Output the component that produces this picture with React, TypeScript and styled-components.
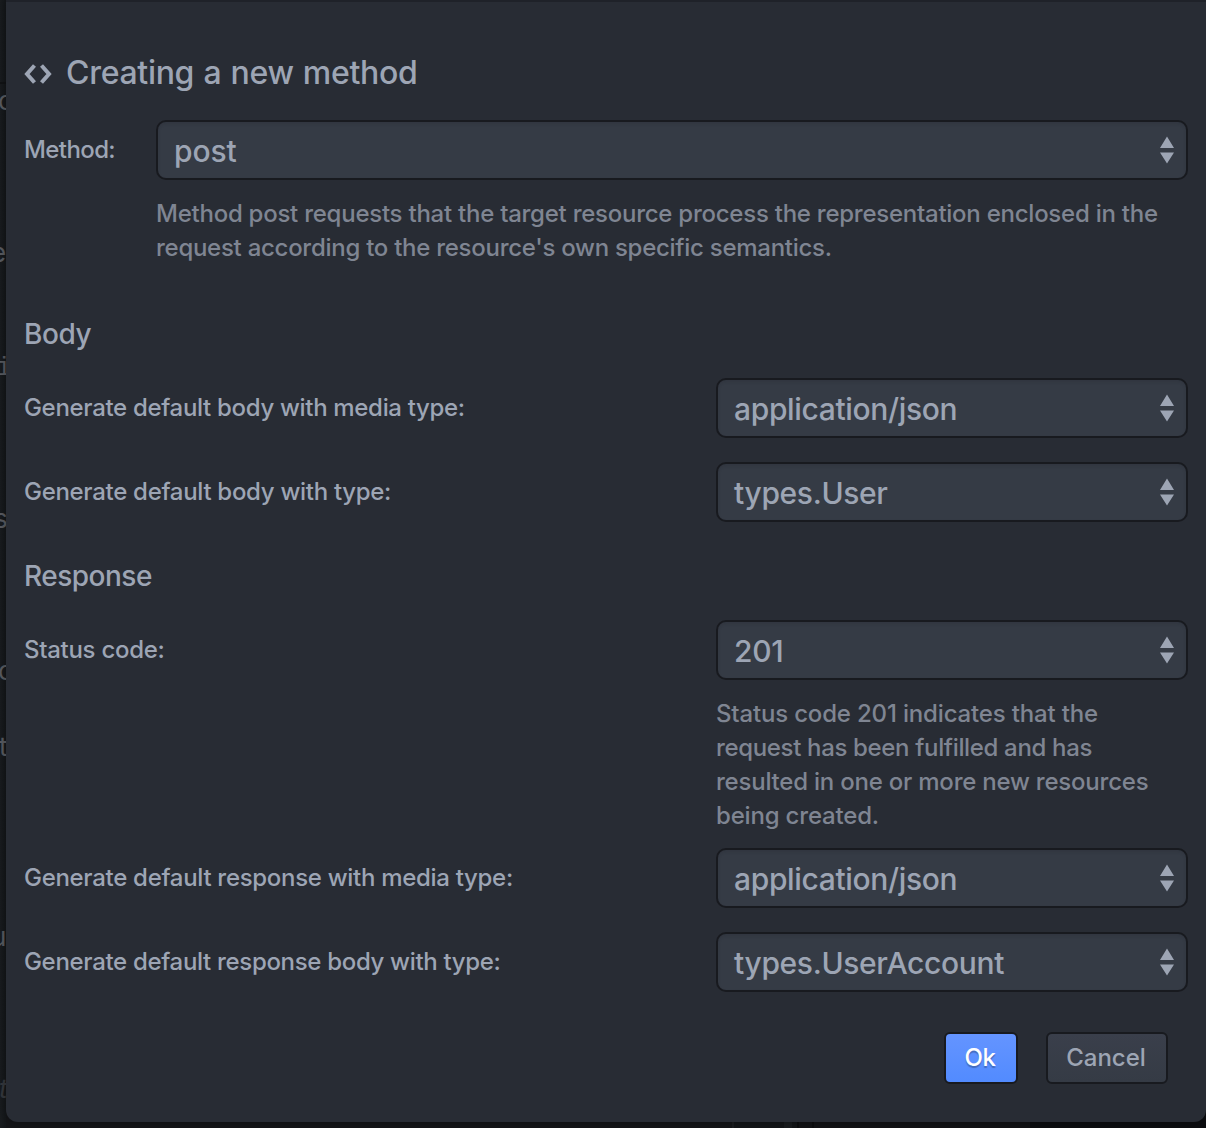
import React from 'react';
import styled, { createGlobalStyle } from 'styled-components';

const GlobalStyle = createGlobalStyle`
  * { box-sizing: border-box; }
  body {
    margin: 0;
    background: #121418;
    font-family: Inter, "Liberation Sans", sans-serif;
    color: #9da5b4;
    overflow: hidden;
  }
`;

const Screen = styled.div`
  display: flex;
  width: 1206px;
  height: 1128px;
  overflow: hidden;
  background: linear-gradient(
    90deg,
    #141518 0 732px,
    #1b1d20 732px 734px,
    #131518 734px 784px,
    #191c1f 784px 792px,
    #131518 792px 797px,
    #0c0d0f 797px 799px,
    #121316 799px 812px,
    #0c0d0f 812px 814px,
    #121316 814px 1030px,
    #0c0d10 1030px
  );
`;

const Editor = styled.div`
  flex: none;
  width: 6px;
  height: 1128px;
  margin-right: -10px;
  overflow: hidden;
  background: linear-gradient(#111315, #111315) 0 82px / 6px 2px no-repeat, linear-gradient(90deg, #191c1f, #14171a);
`;

const CodeLine = styled.div<{ $gap: number; $shift: number; $dim?: boolean; $mono?: boolean }>`
  height: 40px;
  margin-top: ${p => p.$gap}px;
  text-indent: ${p => p.$shift}px;
  line-height: 40px;
  white-space: nowrap;
  font-family: ${p => (p.$mono ? '"Liberation Mono", monospace' : 'Inter, sans-serif')};
  font-size: 26px;
  font-style: ${p => (p.$dim ? 'italic' : 'normal')};
  color: ${p => (p.$dim ? '#36393e' : '#5a5d63')};
`;

const Dialog = styled.form`
  display: flex;
  flex-direction: column;
  flex: none;
  width: 1200px;
  height: 1122px;
  margin-left: 10px;
  padding: 51px 18px 0;
  background: #282c34;
  border-top: 2px solid #1f2229;
  border-radius: 0 0 12px 12px;
  box-shadow: 0 0 12px rgba(0, 0, 0, 0.35);
`;

const Title = styled.h1`
  display: flex;
  align-items: center;
  gap: 14px;
  height: 38px;
  margin: 0 0 29px;
  font-size: 32px;
  font-weight: 450;
  word-spacing: 1px;
  white-space: nowrap;

  svg { margin-top: 3px; }
`;

const SectionTitle = styled.h2<{ $top: number }>`
  height: 34px;
  margin: ${p => p.$top}px 0 27px;
  font-size: 28px;
  line-height: 34px;
  font-weight: 450;
`;

const Row = styled.div<{ $label: number; $top?: number }>`
  display: grid;
  grid-template-columns: ${p => p.$label}px 1fr;
  margin-top: ${p => p.$top ?? 0}px;
`;

const Label = styled.label`
  font-size: 24px;
  line-height: 60px;
  font-weight: 450;
  white-space: nowrap;
`;

const Select = styled.button`
  display: flex;
  align-items: center;
  justify-content: space-between;
  width: 100%;
  height: 60px;
  padding: 1px 12px 0 16px;
  border: 2px solid #181a1f;
  border-radius: 10px;
  background: #353b45;
  box-shadow: inset 0 2px 3px rgba(24, 26, 31, 0.15);
  color: inherit;
  font: 450 30px/36px Inter, "Liberation Sans", sans-serif;

  svg { margin-top: -1px; }
`;

const Help = styled.p`
  display: flex;
  flex-direction: column;
  margin: 17px 0 0;
  font-size: 24px;
  line-height: 34px;
  font-weight: 450;
  color: #7f8592;
  white-space: nowrap;
`;

const Actions = styled.div`
  display: flex;
  justify-content: flex-end;
  gap: 28px;
  margin: 40px 20px 0 0;
`;

const Button = styled.button<{ $primary?: boolean; $w: number }>`
  width: ${p => p.$w}px;
  height: 52px;
  padding: 0 2px 0 0;
  border: 2px solid #181a1f;
  border-radius: 6px;
  background: ${p => (p.$primary ? 'linear-gradient(#6494ff, #528bff)' : 'linear-gradient(#3a3f4b, #353b45)')};
  color: ${p => (p.$primary ? '#fff' : '#9da5b4')};
  text-shadow: ${p => (p.$primary ? '0 2px 1px rgba(0,0,0,0.25)' : 'none')};
  font: ${p => (p.$primary ? 500 : 450)} 24px/46px Inter, "Liberation Sans", sans-serif;
`;

const Fit = styled.span<{ $ls?: number }>`
  letter-spacing: ${p => p.$ls ?? 0}px;
`;

const Arrows = () => (
  <svg width="14" height="28" viewBox="0 0 14 28" fill="#9da5b4">
    <path d="M7 0.5 14 12H0ZM0 16.5H14L7 27.5Z" />
  </svg>
);

const Picker = ({ value, ls }: { value: string; ls?: number }) => (
  <Select type="button">
    <Fit $ls={ls ?? -0.35}>{value}</Fit>
    <Arrows />
  </Select>
);

export default function App() {
  return (
    <Screen>
      <GlobalStyle />
      <Editor>
        <CodeLine $gap={81} $shift={-2}>c</CodeLine>
        <CodeLine $gap={112} $shift={-9}>e</CodeLine>
        <CodeLine $gap={75} $shift={-4} $mono>i</CodeLine>
        <CodeLine $gap={111} $shift={-6}>s</CodeLine>
        <CodeLine $gap={112} $shift={-2}>c</CodeLine>
        <CodeLine $gap={36} $shift={-1}>t</CodeLine>
        <CodeLine $gap={150} $shift={-9}>u</CodeLine>
        <CodeLine $gap={112} $shift={-1} $dim>t</CodeLine>
      </Editor>
      <Dialog>
        <Title>
          <svg width="28" height="20" viewBox="0 0 28 20" fill="none" stroke="#9da5b4" strokeWidth="4">
            <path d="M10.5 1.5 3 10l7.5 8.5M17.5 1.5 25 10l-7.5 8.5" />
          </svg>
          <Fit $ls={-0.3}>Creating a new method</Fit>
        </Title>
        <Row $label={132}>
          <Label><Fit $ls={-0.6}>Method:</Fit></Label>
          <div>
            <Picker value="post" ls={-0.1} />
            <Help>
              <Fit $ls={-0.25}>Method post requests that the target resource process the representation enclosed in the</Fit>
              <Fit $ls={-0.27}>request according to the resource's own specific semantics.</Fit>
            </Help>
          </div>
        </Row>
        <SectionTitle $top={52}><Fit $ls={-0.4}>Body</Fit></SectionTitle>
        <Row $label={692}>
          <Label><Fit $ls={-0.32}>Generate default body with media type:</Fit></Label>
          <Picker value="application/json" />
        </Row>
        <Row $label={692} $top={24}>
          <Label><Fit $ls={-0.3}>Generate default body with type:</Fit></Label>
          <Picker value="types.User" />
        </Row>
        <SectionTitle $top={37}><Fit $ls={-0.5}>Response</Fit></SectionTitle>
        <Row $label={692}>
          <Label><Fit $ls={-0.28}>Status code:</Fit></Label>
          <div>
            <Picker value="201" />
            <Help>
              <Fit $ls={-0.17}>Status code 201 indicates that the</Fit>
              <Fit $ls={-0.34}>request has been fulfilled and has</Fit>
              <Fit $ls={-0.22}>resulted in one or more new resources</Fit>
              <Fit $ls={-0.18}>being created.</Fit>
            </Help>
          </div>
        </Row>
        <Row $label={692} $top={15}>
          <Label><Fit $ls={-0.3}>Generate default response with media type:</Fit></Label>
          <Picker value="application/json" />
        </Row>
        <Row $label={692} $top={24}>
          <Label><Fit $ls={-0.32}>Generate default response body with type:</Fit></Label>
          <Picker value="types.UserAccount" />
        </Row>
        <Actions>
          <Button type="button" $primary $w={74}><Fit $ls={-0.3}>Ok</Fit></Button>
          <Button type="button" $w={122}>Cancel</Button>
        </Actions>
      </Dialog>
    </Screen>
  );
}
